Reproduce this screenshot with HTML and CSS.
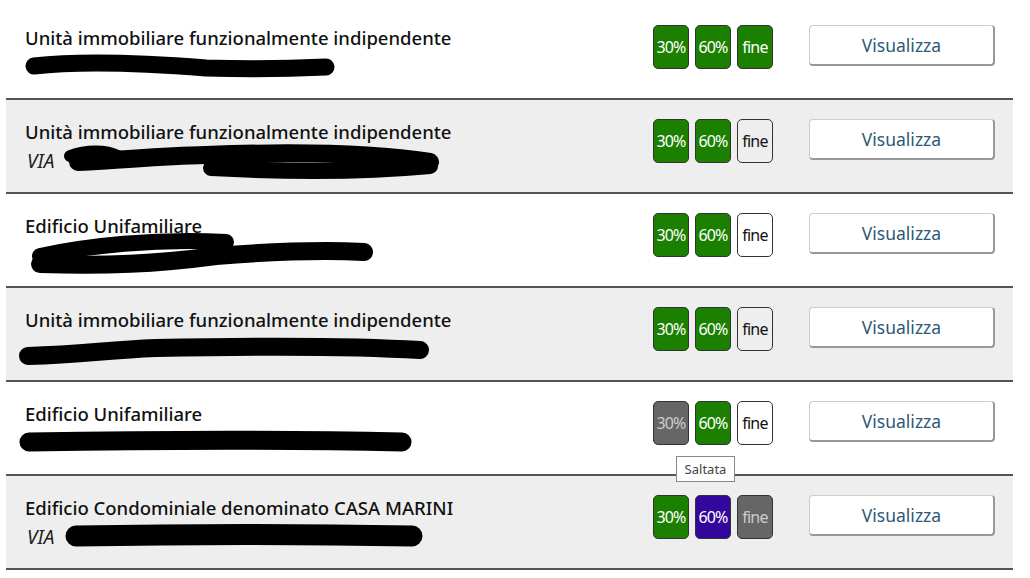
FILE: index.html
```html
<!DOCTYPE html>
<html lang="it">
<head>
<meta charset="utf-8">
<title>Elenco</title>
<link rel="stylesheet" href="styles.css">
</head>
<body>
<div class="list">
  <div class="row">
    <div class="info">
      <div class="title">Unità immobiliare funzionalmente indipendente</div>
      <div class="sub"></div>
      <svg class="redact" width="460" height="92" viewBox="0 0 460 92"><path d="M28 60 C80 54 150 58 200 62 C260 64 300 62 320 61" stroke="#000" stroke-width="17" stroke-linecap="round" fill="none"/></svg>
    </div>
    <div class="badges"><span class="b done">30%</span><span class="b done">60%</span><span class="b done">fine</span></div>
    <button class="view">Visualizza</button>
  </div>
  <div class="row alt">
    <div class="info">
      <div class="title">Unità immobiliare funzionalmente indipendente</div>
      <div class="sub">VIA</div>
      <svg class="redact" width="460" height="92" viewBox="0 0 460 92"><path d="M64 56 C80 50 100 50 112 56" stroke="#000" stroke-width="12" stroke-linecap="round" fill="none"/><path d="M72 62 C120 60 150 56 200 55 C280 52 360 52 424 62" stroke="#000" stroke-width="18" stroke-linecap="round" fill="none"/><path d="M205 68 C280 72 360 72 424 66" stroke="#000" stroke-width="16" stroke-linecap="round" fill="none"/></svg>
    </div>
    <div class="badges"><span class="b done">30%</span><span class="b done">60%</span><span class="b todo">fine</span></div>
    <button class="view">Visualizza</button>
  </div>
  <div class="row">
    <div class="info">
      <div class="title">Edificio Unifamiliare</div>
      <div class="sub"></div>
      <svg class="redact" width="460" height="92" viewBox="0 0 460 92"><path d="M34 62 C80 52 150 44 220 48" stroke="#000" stroke-width="16" stroke-linecap="round" fill="none"/><path d="M34 70 C100 72 150 70 210 62 C260 58 320 56 358 58" stroke="#000" stroke-width="18" stroke-linecap="round" fill="none"/></svg>
    </div>
    <div class="badges"><span class="b done">30%</span><span class="b done">60%</span><span class="b todo">fine</span></div>
    <button class="view">Visualizza</button>
  </div>
  <div class="row alt">
    <div class="info">
      <div class="title">Unità immobiliare funzionalmente indipendente</div>
      <div class="sub"></div>
      <svg class="redact" width="460" height="92" viewBox="0 0 460 92"><path d="M22 68 C80 66 100 62 150 60 C250 58 350 58 414 62" stroke="#000" stroke-width="18" stroke-linecap="round" fill="none"/></svg>
    </div>
    <div class="badges"><span class="b done">30%</span><span class="b done">60%</span><span class="b todo">fine</span></div>
    <button class="view">Visualizza</button>
  </div>
  <div class="row">
    <div class="info">
      <div class="title">Edificio Unifamiliare</div>
      <div class="sub"></div>
      <svg class="redact" width="460" height="92" viewBox="0 0 460 92"><path d="M23 60 C150 58 300 58 396 60" stroke="#000" stroke-width="19" stroke-linecap="round" fill="none"/></svg>
    </div>
    <div class="badges"><span class="b skip">30%</span><span class="b done">60%</span><span class="b todo">fine</span><span class="tip">Saltata</span></div>
    <button class="view">Visualizza</button>
  </div>
  <div class="row alt">
    <div class="info">
      <div class="title">Edificio Condominiale denominato CASA MARINI</div>
      <div class="sub">VIA</div>
      <svg class="redact" width="460" height="92" viewBox="0 0 460 92"><path d="M70 60 C180 58 300 58 406 60" stroke="#000" stroke-width="21" stroke-linecap="round" fill="none"/></svg>
    </div>
    <div class="badges"><span class="b done">30%</span><span class="b sel">60%</span><span class="b skip">fine</span></div>
    <button class="view">Visualizza</button>
  </div>
</div>
</body>
</html>
```
FILE: styles.css
```css
html, body {
  margin: 0;
  padding: 0;
  background: #fff;
}
body {
  font-family: "Noto Sans", "Open Sans", sans-serif;
  color: #111;
}
.list {
  margin: 6px 0 0 6px;
  width: 1007px;
}
.row {
  display: flex;
  align-items: flex-start;
  height: 92px;
  border-bottom: 2px solid #555;
  background: #fff;
}
.row.alt {
  background: #eeeeee;
}
.info {
  position: relative;
  flex: 1;
  padding: 20px 0 0 19px;
}
.title {
  font-size: 18.5px;
  font-weight: 500;
  line-height: 24px;
}
.sub {
  font-size: 19px;
  line-height: 34px;
  font-style: italic;
  color: #222;
  height: 34px;
  padding-left: 2px;
}
.redact {
  position: absolute;
  left: 0;
  top: 0;
}
.badges {
  position: relative;
  display: flex;
  gap: 6px;
  margin-top: 19px;
}
.b {
  box-sizing: border-box;
  width: 36px;
  height: 44px;
  border: 1px solid #333;
  border-radius: 5px;
  display: flex;
  align-items: center;
  justify-content: center;
  font-size: 16px;
  letter-spacing: -0.8px;
}
.b.done {
  background: #1b8000;
  color: #fff;
}
.b.todo {
  background: transparent;
  color: #111;
}
.row:not(.alt) .b.todo {
  background: #fff;
}
.b.skip {
  background: #666;
  color: #ccc;
}
.b.sel {
  background: #33069c;
  color: #fff;
}
.tip {
  position: absolute;
  left: 23px;
  top: 55px;
  box-sizing: border-box;
  width: 59px;
  height: 26px;
  background: #fff;
  border: 1px solid #888;
  font-size: 13px;
  color: #444;
  display: flex;
  align-items: center;
  justify-content: center;
  z-index: 2;
}
.view {
  box-sizing: border-box;
  margin: 19px 18px 0 36px;
  width: 186px;
  height: 41px;
  background: #fff;
  border: 1px solid #ccc;
  border-right: 2px solid #999;
  border-bottom: 2px solid #999;
  border-radius: 4px;
  font-family: "Noto Sans", "Open Sans", sans-serif;
  font-size: 17.5px;
  color: #2d5a76;
  padding: 0;
}
```
